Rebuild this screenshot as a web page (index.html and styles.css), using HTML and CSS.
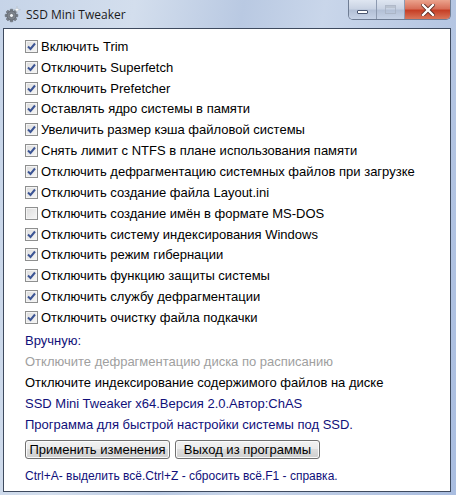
FILE: index.html
```html
<!DOCTYPE html>
<html lang="ru">
<head>
    <meta charset="UTF-8">
    <title>SSD Mini Tweaker</title>
    <link rel="stylesheet" href="styles.css">
</head>
<body>
    <div class="window">
        <!-- заголовок окна -->
        <div class="titlebar">
            <svg class="app-icon" width="17" height="17" viewBox="0 0 17 17">
                <g transform="translate(7.5 9.5)">
                    <g fill="#7d838c" stroke="#4f555d" stroke-width="0.5">
                        <rect x="-1.3" y="-6.3" width="2.6" height="12.6" rx="0.5"/>
                        <rect x="-1.3" y="-6.3" width="2.6" height="12.6" rx="0.5" transform="rotate(45)"/>
                        <rect x="-1.3" y="-6.3" width="2.6" height="12.6" rx="0.5" transform="rotate(90)"/>
                        <rect x="-1.3" y="-6.3" width="2.6" height="12.6" rx="0.5" transform="rotate(135)"/>
                        <circle r="4.6"/>
                    </g>
                    <circle r="2" fill="#eef0f3" stroke="#4f555d" stroke-width="0.6"/>
                </g>
                <path d="M13 0.5 L13.7 3 L16.3 3.7 L13.7 4.4 L13 7 L12.3 4.4 L9.7 3.7 L12.3 3 Z" fill="#ffffff" stroke="#a7b0bb" stroke-width="0.4"/>
            </svg>
            <span class="title">SSD Mini Tweaker</span>
            <div class="caption">
                <div class="cap-btn cap-min"><span class="min-bar"></span></div>
                <div class="cap-btn cap-max"><span class="max-box"></span></div>
                <div class="cap-btn cap-close">
                    <svg width="14" height="12" viewBox="0 0 14 12">
                        <path d="M2 1 L12 11 M12 1 L2 11" stroke="#5a2a22" stroke-width="4" stroke-linecap="square"/>
                        <path d="M2 1 L12 11 M12 1 L2 11" stroke="#ffffff" stroke-width="2.4" stroke-linecap="square"/>
                    </svg>
                </div>
            </div>
        </div>

        <!-- клиентская область -->
        <div class="client">
            <ul class="options">
                <li><span class="box checked"></span>Включить Trim</li>
                <li><span class="box checked"></span>Отключить Superfetch</li>
                <li><span class="box checked"></span>Отключить Prefetcher</li>
                <li><span class="box checked"></span>Оставлять ядро системы в памяти</li>
                <li><span class="box checked"></span>Увеличить размер кэша файловой системы</li>
                <li><span class="box checked"></span>Снять лимит с NTFS в плане использования памяти</li>
                <li><span class="box checked"></span>Отключить дефрагментацию системных файлов при загрузке</li>
                <li><span class="box checked"></span>Отключить создание файла Layout.ini</li>
                <li><span class="box"></span>Отключить создание имён в формате MS-DOS</li>
                <li><span class="box checked"></span>Отключить систему индексирования Windows</li>
                <li><span class="box checked"></span>Отключить режим гибернации</li>
                <li><span class="box checked"></span>Отключить функцию защиты системы</li>
                <li><span class="box checked"></span>Отключить службу дефрагментации</li>
                <li><span class="box checked"></span>Отключить очистку файла подкачки</li>
            </ul>

            <div class="manual">
                <div class="line navy">Вручную:</div>
                <div class="line gray">Отключите дефрагментацию диска по расписанию</div>
                <div class="line">Отключите индексирование содержимого файлов на диске</div>
                <div class="line navy">SSD Mini Tweaker x64.Версия 2.0.Автор:ChAS</div>
                <div class="line navy">Программа для быстрой настройки системы под SSD.</div>
            </div>

            <div class="buttons">
                <button class="btn">Применить изменения</button>
                <button class="btn">Выход из программы</button>
            </div>

            <div class="hint">Ctrl+A- выделить всё.Ctrl+Z - сбросить всё.F1 - справка.</div>
        </div>
    </div>
</body>
</html>
```

FILE: styles.css
```css
* {
    box-sizing: border-box;
}

body {
    margin: 0;
    font-family: "Liberation Sans", Arial, sans-serif;
}

/* окно */
.window {
    width: 456px;
    height: 495px;
    padding: 0 5px 3px 3px;
    display: flex;
    flex-direction: column;
    background: linear-gradient(100deg, #c6d4e8 0%, #d3deed 25%, #b9c9e2 45%, #c9d6ea 60%, #b8c8e3 80%, #a9bde0 100%);
}

.titlebar {
    height: 28px;
    display: flex;
    align-items: center;
    position: relative;
    padding-left: 1px;
}

.app-icon {
    margin-top: 1px;
}

.title {
    margin-left: 5px;
    margin-top: 1px;
    font-family: "Open Sans", "Noto Sans", sans-serif;
    font-size: 12px;
    color: #1b1b1b;
}

/* кнопки заголовка */
.caption {
    position: absolute;
    top: 0;
    right: 0;
    height: 20px;
    display: flex;
    border: 1px solid #6f7d94;
    border-top: none;
    border-radius: 0 0 5px 5px;
    overflow: hidden;
}

.cap-btn {
    height: 100%;
    display: flex;
    align-items: center;
    justify-content: center;
}

.cap-min,
.cap-max {
    width: 28px;
    background: linear-gradient(#dfe6f1 0%, #c9d3e3 45%, #b3c0d6 55%, #c6d2e6 100%);
    border-right: 1px solid #8d9ab0;
}

.cap-close {
    width: 45px;
    background: linear-gradient(#eba38d 0%, #d8705a 45%, #c63f26 55%, #d9765a 100%);
}

.min-bar {
    width: 11px;
    height: 4px;
    margin-top: 5px;
    background: #fff;
    border: 1px solid #4a5670;
    border-radius: 1px;
}

.max-box {
    width: 11px;
    height: 9px;
    border: 1px solid #a8b2c2;
    box-shadow: inset 0 2px 0 #b6bfcc;
    opacity: 0.8;
}

/* клиентская область */
.client {
    flex: 1;
    background: #fff;
    border: 1px solid #3e4a5e;
    padding: 7px 0 0 21px;
    font-size: 13px;
    color: #000;
}

.options {
    margin: 0;
    padding: 0;
    list-style: none;
}

.options li {
    height: 20.85px;
    display: flex;
    align-items: center;
    white-space: nowrap;
}

.box {
    width: 13px;
    height: 13px;
    margin-right: 3px;
    border: 1px solid #8e8f8f;
    background: linear-gradient(135deg, #dcdcdc, #f6f6f6);
    box-shadow: inset 0 0 0 1px #f4f4f4;
    flex-shrink: 0;
}

.box.checked {
    background: url("data:image/svg+xml,%3Csvg xmlns='http://www.w3.org/2000/svg' width='11' height='11'%3E%3Cpath d='M2 5.5 L4.5 8 L9 2.5' fill='none' stroke='%233b5494' stroke-width='2'/%3E%3C/svg%3E") center no-repeat, linear-gradient(135deg, #dcdcdc, #f6f6f6);
}

.manual {
    margin-top: 2px;
}

.line {
    height: 21px;
    display: flex;
    align-items: center;
    white-space: nowrap;
}

.navy {
    color: #10107a;
}

.gray {
    color: #a0a0a0;
}

/* кнопки */
.buttons {
    display: flex;
    gap: 5px;
    margin-top: 5px;
}

.btn {
    width: 145px;
    height: 19px;
    padding: 0;
    font-family: "Liberation Sans", Arial, sans-serif;
    font-size: 13px;
    color: #000;
    border: 1px solid #707070;
    border-radius: 3px;
    background: linear-gradient(#f2f2f2 0%, #ebebeb 45%, #dddddd 50%, #cfcfcf 100%);
    box-shadow: inset 0 0 0 1px #fbfbfb;
}

.hint {
    margin-top: 10px;
    font-size: 12px;
    color: #10107a;
    white-space: nowrap;
}
```
